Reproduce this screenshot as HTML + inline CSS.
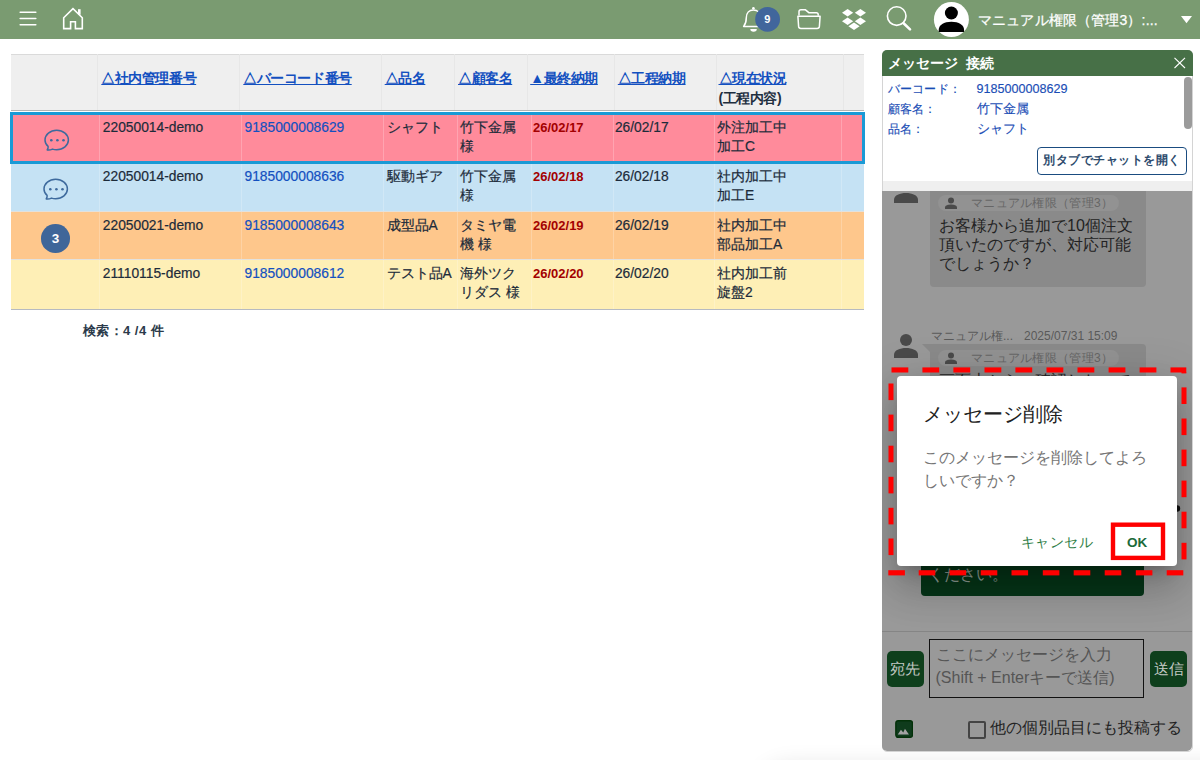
<!DOCTYPE html><html><head><meta charset="utf-8"><style>
*{box-sizing:border-box;margin:0;padding:0}
html,body{width:1200px;height:760px;overflow:hidden;background:#fff;font-family:"Liberation Sans",sans-serif;position:relative}
.a{position:absolute}
#topbar{left:0;top:0;width:1200px;height:38.5px;background:#7a9b71}
#th{left:11px;top:53.5px;width:853px;height:57.5px;background:#efefef;border-top:1px solid #dadada;border-bottom:1.5px solid #b4b4b4}
.hd{position:absolute;top:54px;width:1px;height:55.5px;background:#e7e7e7}
.ht{position:absolute;top:68.2px;font-size:14px;letter-spacing:-0.45px;font-weight:bold;line-height:20px;color:#1f2f3f;white-space:nowrap}
.ht u{color:#1350c0;text-decoration:underline;text-decoration-thickness:1px;text-underline-offset:0.5px}
.row{position:absolute;left:11px;width:853px}
.rd{position:absolute;width:1px;background:rgba(255,255,255,0.22)}
.ct{position:absolute;-webkit-text-stroke:0.2px currentColor;font-size:13.8px;line-height:18.6px;color:#1c2b3a;white-space:nowrap}
.lk{color:#1350c0}
.ht,.dt,.nb{-webkit-text-stroke:0}
.dt{color:#a30000;font-weight:bold;font-size:13px}
</style></head><body>
<div class="a" id="topbar"></div>
<svg class="a" style="left:0;top:0" width="1200" height="39" viewBox="0 0 1200 39"><g stroke="#fff" stroke-width="1.6" fill="none" stroke-linecap="round"><line x1="20.2" y1="12.2" x2="35.8" y2="12.2"/><line x1="20.2" y1="18.5" x2="35.8" y2="18.5"/><line x1="20.2" y1="24.8" x2="35.8" y2="24.8"/></g><path d="M73 8.6 L63.7 17.8 V28.6 H70.6 V21.7 H75.4 V28.6 H82.3 V17.8 Z" stroke="#fff" stroke-width="1.6" fill="none" stroke-linejoin="miter"/><rect x="78" y="9.2" width="2.6" height="5.5" fill="#fff"/><path d="M743.6 26.5 C745.6 24.2 746.3 21.5 746.3 17.8 C746.3 12.9 749.3 9.9 753.4 9.9 C757.5 9.9 760.5 12.9 760.5 17.8 C760.5 21.5 761.2 24.2 763.2 26.5 Z" stroke="#fff" stroke-width="1.5" fill="none" stroke-linejoin="round"/><circle cx="753.4" cy="8.3" r="1.3" fill="#fff"/><path d="M750.3 29 H756.8 A3.25 2.8 0 0 1 750.3 29 Z" fill="#fff"/><circle cx="767.6" cy="19.3" r="12.4" fill="#41669c"/><text x="767.4" y="23" font-family="Liberation Sans" font-weight="bold" font-size="11" fill="#fff" text-anchor="middle">9</text><g stroke="#fff" stroke-width="1.5" fill="none" stroke-linejoin="round"><path d="M799 15.5 V11.6 Q799 9.7 801 9.7 H805.2 L808.8 12.7 H816.3 Q818.2 12.7 818.2 14.6 V15.8"/><path d="M797.9 16.3 H820.1 L819.4 26.4 Q819.2 28.5 817.1 28.5 H800.9 Q798.8 28.5 798.6 26.4 Z"/></g><g fill="#fff"><polygon points="842,12.7 847.6,9 853.2,12.7 847.6,16.4"/><polygon points="854.8,12.7 860.4,9 866,12.7 860.4,16.4"/><polygon points="842,21.2 847.6,17.5 853.2,21.2 847.6,24.9"/><polygon points="854.8,21.2 860.4,17.5 866,21.2 860.4,24.9"/><polygon points="848.4,26.2 854,22.5 859.6,26.2 854,29.9"/></g><circle cx="896.7" cy="16.1" r="9.3" stroke="#fff" stroke-width="1.6" fill="none"/><line x1="903.6" y1="23.2" x2="910" y2="29.4" stroke="#fff" stroke-width="2.6" stroke-linecap="round"/><circle cx="951.4" cy="19.5" r="17.5" fill="#fff"/><circle cx="951.4" cy="13" r="6.5" fill="#000"/><path d="M938.7 32.1 V30 C938.7 25 944 21.8 951.4 21.8 C958.8 21.8 964.1 25 964.1 30 V32.1 Z" fill="#000"/><polygon points="1181,16 1192,16 1186.5,23.2" fill="#fff"/></svg>
<div class="a" style="left:978px;top:9.5px;font-size:14px;letter-spacing:0.15px;line-height:20px;color:#fff;-webkit-text-stroke:0.25px #fff;white-space:nowrap">マニュアル権限（管理3）:...</div>
<div class="a" id="th"></div>
<div class="hd" style="left:97.3px"></div>
<div class="hd" style="left:239.2px"></div>
<div class="hd" style="left:381.2px"></div>
<div class="hd" style="left:454.2px"></div>
<div class="hd" style="left:527.3px"></div>
<div class="hd" style="left:614.3px"></div>
<div class="hd" style="left:716.3px"></div>
<div class="hd" style="left:843.2px"></div>
<div class="ht" style="left:101.3px"><u>△社内管理番号</u></div>
<div class="ht" style="left:243.3px"><u>△バーコード番号</u></div>
<div class="ht" style="left:384.7px"><u>△品名</u></div>
<div class="ht" style="left:458px"><u>△顧客名</u></div>
<div class="ht" style="left:530.2px"><u>▲最終納期</u></div>
<div class="ht" style="left:617.8px"><u>△工程納期</u></div>
<div class="ht" style="left:718.5px"><u>△現在状況</u><br>(工程内容)</div>
<div class="row" style="top:111.5px;height:50.5px;background:#ff8b9b"></div>
<div class="rd" style="left:99px;top:111.5px;height:50.5px"></div>
<div class="rd" style="left:241.3px;top:111.5px;height:50.5px"></div>
<div class="rd" style="left:383.3px;top:111.5px;height:50.5px"></div>
<div class="rd" style="left:457px;top:111.5px;height:50.5px"></div>
<div class="rd" style="left:531px;top:111.5px;height:50.5px"></div>
<div class="rd" style="left:612.7px;top:111.5px;height:50.5px"></div>
<div class="rd" style="left:714.4px;top:111.5px;height:50.5px"></div>
<div class="rd" style="left:841.4px;top:111.5px;height:50.5px"></div>
<div class="ct" style="left:102.8px;top:119.3px">22050014-demo</div>
<div class="ct" style="left:244.5px;top:119.3px"><span class="lk">9185000008629</span></div>
<div class="ct" style="left:386.5px;top:119.3px">シャフト</div>
<div class="ct" style="left:460.0px;top:119.3px">竹下金属<br>様</div>
<div class="ct" style="left:533.0px;top:119.3px"><span class="dt">26/02/17</span></div>
<div class="ct" style="left:614.9px;top:119.3px">26/02/17</div>
<div class="ct" style="left:717.0px;top:119.3px">外注加工中<br>加工C</div>
<div class="row" style="top:162px;height:49.3px;background:#c5e2f4"></div>
<div class="rd" style="left:99px;top:162px;height:49.3px"></div>
<div class="rd" style="left:241.3px;top:162px;height:49.3px"></div>
<div class="rd" style="left:383.3px;top:162px;height:49.3px"></div>
<div class="rd" style="left:457px;top:162px;height:49.3px"></div>
<div class="rd" style="left:531px;top:162px;height:49.3px"></div>
<div class="rd" style="left:612.7px;top:162px;height:49.3px"></div>
<div class="rd" style="left:714.4px;top:162px;height:49.3px"></div>
<div class="rd" style="left:841.4px;top:162px;height:49.3px"></div>
<div class="ct" style="left:102.8px;top:168px">22050014-demo</div>
<div class="ct" style="left:244.5px;top:168px"><span class="lk">9185000008636</span></div>
<div class="ct" style="left:386.5px;top:168px">駆動ギア</div>
<div class="ct" style="left:460.0px;top:168px">竹下金属<br>様</div>
<div class="ct" style="left:533.0px;top:168px"><span class="dt">26/02/18</span></div>
<div class="ct" style="left:614.9px;top:168px">26/02/18</div>
<div class="ct" style="left:717.0px;top:168px">社内加工中<br>加工E</div>
<div class="row" style="top:211px;height:48.5px;background:#fec78c"></div>
<div class="rd" style="left:99px;top:211px;height:48.5px"></div>
<div class="rd" style="left:241.3px;top:211px;height:48.5px"></div>
<div class="rd" style="left:383.3px;top:211px;height:48.5px"></div>
<div class="rd" style="left:457px;top:211px;height:48.5px"></div>
<div class="rd" style="left:531px;top:211px;height:48.5px"></div>
<div class="rd" style="left:612.7px;top:211px;height:48.5px"></div>
<div class="rd" style="left:714.4px;top:211px;height:48.5px"></div>
<div class="rd" style="left:841.4px;top:211px;height:48.5px"></div>
<div class="ct" style="left:102.8px;top:217.4px">22050021-demo</div>
<div class="ct" style="left:244.5px;top:217.4px"><span class="lk">9185000008643</span></div>
<div class="ct" style="left:386.5px;top:217.4px">成型品A</div>
<div class="ct" style="left:460.0px;top:217.4px">タミヤ電<br>機 様</div>
<div class="ct" style="left:533.0px;top:217.4px"><span class="dt">26/02/19</span></div>
<div class="ct" style="left:614.9px;top:217.4px">26/02/19</div>
<div class="ct" style="left:717.0px;top:217.4px">社内加工中<br>部品加工A</div>
<div class="row" style="top:259.5px;height:49px;background:#feefb6"></div>
<div class="rd" style="left:99px;top:259.5px;height:49px"></div>
<div class="rd" style="left:241.3px;top:259.5px;height:49px"></div>
<div class="rd" style="left:383.3px;top:259.5px;height:49px"></div>
<div class="rd" style="left:457px;top:259.5px;height:49px"></div>
<div class="rd" style="left:531px;top:259.5px;height:49px"></div>
<div class="rd" style="left:612.7px;top:259.5px;height:49px"></div>
<div class="rd" style="left:714.4px;top:259.5px;height:49px"></div>
<div class="rd" style="left:841.4px;top:259.5px;height:49px"></div>
<div class="ct" style="left:102.8px;top:265.4px">21110115-demo</div>
<div class="ct" style="left:244.5px;top:265.4px"><span class="lk">9185000008612</span></div>
<div class="ct" style="left:386.5px;top:265.4px">テスト品A</div>
<div class="ct" style="left:460.0px;top:265.4px">海外ツク<br>リダス 様</div>
<div class="ct" style="left:533.0px;top:265.4px"><span class="dt">26/02/20</span></div>
<div class="ct" style="left:614.9px;top:265.4px">26/02/20</div>
<div class="ct" style="left:717.0px;top:265.4px">社内加工前<br>旋盤2</div>
<div class="a" style="left:11px;top:211px;width:853px;height:1px;background:#e3e1dc"></div>
<div class="a" style="left:11px;top:259px;width:853px;height:1px;background:#e3e1dc"></div>
<svg class="a" style="left:42.6px;top:127.5px" width="28" height="26" viewBox="0 0 28 26"><path d="M4.2 21.9 C4.9 20.8 5.4 19.5 5.1 18.4 C3.2 16.7 2 14.5 2 12 C2 6.6 7.2 2.3 13.7 2.3 C20.2 2.3 25.4 6.6 25.4 12 C25.4 17.4 20.2 21.7 13.7 21.7 C12.2 21.7 10.8 21.5 9.5 21.1 C8 21.8 6 22.2 4.2 21.9 Z" fill="none" stroke="#3e6a9d" stroke-width="1.5" stroke-linejoin="round"/><circle cx="8.3" cy="12.2" r="1.3" fill="#3e6a9d"/><circle cx="14.4" cy="12.2" r="1.3" fill="#3e6a9d"/><circle cx="20.5" cy="12.2" r="1.3" fill="#3e6a9d"/></svg>
<svg class="a" style="left:42.2px;top:176.7px" width="28" height="26" viewBox="0 0 28 26"><path d="M4.2 21.9 C4.9 20.8 5.4 19.5 5.1 18.4 C3.2 16.7 2 14.5 2 12 C2 6.6 7.2 2.3 13.7 2.3 C20.2 2.3 25.4 6.6 25.4 12 C25.4 17.4 20.2 21.7 13.7 21.7 C12.2 21.7 10.8 21.5 9.5 21.1 C8 21.8 6 22.2 4.2 21.9 Z" fill="none" stroke="#3e6a9d" stroke-width="1.5" stroke-linejoin="round"/><circle cx="8.3" cy="12.2" r="1.3" fill="#3e6a9d"/><circle cx="14.4" cy="12.2" r="1.3" fill="#3e6a9d"/><circle cx="20.5" cy="12.2" r="1.3" fill="#3e6a9d"/></svg>
<div class="a" style="left:41.2px;top:224px;width:28.6px;height:28.6px;border-radius:50%;background:#3f6699;color:#fff;font-size:13.5px;font-weight:bold;line-height:29.5px;-webkit-text-stroke:0;text-align:center">3</div>
<div class="a" style="left:11px;top:308.5px;width:853px;height:1.5px;background:#b6bac1"></div>
<div class="a" style="left:10px;top:112px;width:855px;height:52px;border:3px solid #1a9ad6"></div>
<div class="a" style="left:82.5px;top:322px;font-size:13px;letter-spacing:0.5px;font-weight:bold;color:#2b3a4a;white-space:nowrap;-webkit-text-stroke:0">検索：4 /4 件</div>
<div class="a" style="left:760px;top:768px;width:700px;height:60px;border-radius:30px;box-shadow:0 0 22px 4px rgba(0,0,0,0.10)"></div>
<div class="a" style="left:881.5px;top:49.5px;width:311px;height:702px;border-radius:5px;background:#fff;border:1px solid #d4d4d4"></div>
<div class="a" style="left:881.5px;top:49.5px;width:311px;height:26.3px;border-radius:5px 5px 0 0;background:#477047"></div>
<div class="a" style="left:887.5px;top:52.5px;font-size:14px;font-weight:bold;line-height:20px;color:#fff;white-space:nowrap;-webkit-text-stroke:0">メッセージ<span style="margin-left:8px">接続</span></div>
<svg class="a" style="left:1170px;top:53px" width="20" height="20"><path d="M4.5 4.8 L15 15 M15 4.8 L4.5 15" stroke="#fff" stroke-width="1.1"/></svg>
<div class="a" style="left:882.5px;top:180.6px;width:309.5px;height:10.5px;background:#efefef"></div>
<div class="a" style="left:882.5px;top:76px;width:309.5px;height:104.8px;background:#fff;border-radius:0 0 5px 5px"></div>
<div class="a" style="left:1184.2px;top:76.8px;width:7.6px;height:52px;background:#9b9b9b;border-radius:4px"></div>
<div class="a" style="left:887.5px;top:80.5px;-webkit-text-stroke:0.15px currentColor;font-size:12px;letter-spacing:0.25px;line-height:16px;color:#1a4db5;white-space:nowrap">バーコード：</div>
<div class="a" style="left:976.5px;top:80.5px;-webkit-text-stroke:0.15px currentColor;font-size:12.6px;line-height:16px;color:#1a4db5;white-space:nowrap">9185000008629</div>
<div class="a" style="left:887.5px;top:100.5px;-webkit-text-stroke:0.15px currentColor;font-size:12px;letter-spacing:0.25px;line-height:16px;color:#1a4db5;white-space:nowrap">顧客名：</div>
<div class="a" style="left:976.5px;top:100.5px;-webkit-text-stroke:0.15px currentColor;font-size:12.6px;line-height:16px;color:#1a4db5;white-space:nowrap">竹下金属</div>
<div class="a" style="left:887.5px;top:120.5px;-webkit-text-stroke:0.15px currentColor;font-size:12px;letter-spacing:0.25px;line-height:16px;color:#1a4db5;white-space:nowrap">品名：</div>
<div class="a" style="left:976.5px;top:120.5px;-webkit-text-stroke:0.15px currentColor;font-size:12.6px;line-height:16px;color:#1a4db5;white-space:nowrap">シャフト</div>
<div class="a" style="left:1037px;top:147px;width:150px;height:27.7px;border:1.4px solid #1a4c80;border-radius:4px;font-size:12px;letter-spacing:0.5px;font-weight:bold;color:#2c4a6c;-webkit-text-stroke:0;line-height:25px;text-align:center;white-space:nowrap">別タブでチャットを開く</div>
<div class="a" style="left:882px;top:191px;width:310px;height:560px;background:#999999;border-radius:0 0 5px 5px;overflow:hidden">
<svg class="a" style="left:12px;top:-12px" width="24" height="25" viewBox="0 0 24 25"><circle cx="12" cy="6" r="6" fill="#4a4a4a"/><path d="M0 24 V21 C0 16 6 14 12 14 C18 14 24 16 24 21 V24 Z" fill="#4a4a4a"/></svg>
<div class="a" style="left:48px;top:-40px;width:216px;height:136px;background:#8a8a8a;border-radius:4px"></div>
<div class="a" style="left:56px;top:4px;width:181px;height:16px;background:#929292;border-radius:8px"></div>
<svg class="a" style="left:62px;top:5px" width="14" height="14" viewBox="0 0 14 14"><circle cx="7" cy="4.4" r="3" fill="#4a4a4a"/><path d="M1 13 V11.6 C1 9.4 4.5 8.6 7 8.6 C9.5 8.6 13 9.4 13 11.6 V13 Z" fill="#4a4a4a"/></svg>
<div class="a" style="left:89px;top:4px;font-size:12px;letter-spacing:0.3px;line-height:16px;color:#666;white-space:nowrap">マニュアル権限（管理3）</div>
<div class="a" style="left:57px;top:25px;width:200px;font-size:16px;line-height:19px;color:#222">お客様から追加で10個注文頂いたのですが、対応可能でしょうか？</div>
<div class="a" style="left:49px;top:137px;font-size:12px;line-height:16px;color:#5a5a5a;white-space:nowrap">マニュアル権...<span style="margin-left:11px">2025/07/31 15:09</span></div>
<svg class="a" style="left:12px;top:143px" width="24" height="25" viewBox="0 0 24 25"><circle cx="12" cy="6" r="6" fill="#4a4a4a"/><path d="M0 24 V21 C0 16 6 14 12 14 C18 14 24 16 24 21 V24 Z" fill="#4a4a4a"/></svg>
<div class="a" style="left:48px;top:153px;width:216px;height:100px;background:#8a8a8a;border-radius:0 4px 4px 4px"></div>
<svg class="a" style="left:40px;top:153px" width="9" height="10"><polygon points="0,0 9,0 9,9" fill="#8a8a8a"/></svg>
<div class="a" style="left:56px;top:159px;width:181px;height:16px;background:#929292;border-radius:8px"></div>
<svg class="a" style="left:62px;top:160px" width="14" height="14" viewBox="0 0 14 14"><circle cx="7" cy="4.4" r="3" fill="#4a4a4a"/><path d="M1 13 V11.6 C1 9.4 4.5 8.6 7 8.6 C9.5 8.6 13 9.4 13 11.6 V13 Z" fill="#4a4a4a"/></svg>
<div class="a" style="left:89px;top:159px;font-size:12px;letter-spacing:0.3px;line-height:16px;color:#666;white-space:nowrap">マニュアル権限（管理3）</div>
<div class="a" style="left:57px;top:180px;width:200px;font-size:16px;line-height:19px;color:#222">画面上から、確認したいです。</div>
<div class="a" style="left:39px;top:300px;width:223px;height:104.5px;background:#063518;border-radius:4px"></div>
<div class="a" style="left:46px;top:373.5px;font-size:16px;line-height:19px;color:#8c9a90;white-space:nowrap">ください。</div>
<div class="a" style="left:0;top:439.5px;width:310px;height:1px;background:#858585"></div>
<div class="a" style="left:4.8px;top:460px;width:37px;height:35.5px;background:#0e3f1c;border-radius:5px;color:#c4c9c5;font-size:15px;line-height:35px;text-align:center">宛先</div>
<div class="a" style="left:47.2px;top:448.2px;width:215.3px;height:59.2px;border:1px solid #111"></div>
<div class="a" style="left:53.5px;top:452px;font-size:16px;line-height:23px;color:#555;white-space:nowrap">ここにメッセージを入力<br>(Shift + Enterキーで送信)</div>
<div class="a" style="left:268px;top:460px;width:37px;height:35.5px;background:#0e3f1c;border-radius:5px;color:#c4c9c5;font-size:15px;line-height:35px;text-align:center">送信</div>
<svg class="a" style="left:12.7px;top:528.9px" width="18.3" height="18" viewBox="0 0 18 18"><rect x="0.7" y="0.7" width="16.6" height="16.6" rx="2.2" fill="#0f3b1c" stroke="#033008" stroke-width="1.4"/><path d="M2.6 14.5 L5.8 9.7 L8.1 12.5 L9.8 8.8 L13.8 14.5 Z" fill="#a3a3a3"/></svg>
<div class="a" style="left:86px;top:529.8px;width:17.5px;height:17.8px;border:2px solid #444;border-radius:2px"></div>
<div class="a" style="left:108px;top:527px;font-size:16px;line-height:20px;color:#222;white-space:nowrap">他の個別品目にも投稿する</div>
<svg class="a" style="left:288px;top:310px" width="14" height="14"><circle cx="7" cy="7.5" r="3.2" fill="#111"/></svg>
<div class="a" style="left:15px;top:185px;width:280px;height:189.8px;background:#fff;border-radius:4px;box-shadow:0 11px 15px -7px rgba(0,0,0,.2),0 24px 38px 3px rgba(0,0,0,.14),0 9px 46px 8px rgba(0,0,0,.12)"></div>
<div class="a" style="left:41px;top:209px;font-size:20px;line-height:28px;color:#212121;white-space:nowrap">メッセージ削除</div>
<div class="a" style="left:41px;top:254.5px;width:232px;font-size:16px;line-height:23.8px;color:#757575">このメッセージを削除してよろしいですか？</div>
<div class="a" style="left:138.5px;top:341px;font-size:14px;line-height:20px;color:#2e7d45;letter-spacing:0.5px;white-space:nowrap">キャンセル</div>
<div class="a" style="left:245px;top:341.5px;font-size:13.5px;font-weight:bold;line-height:20px;color:#1b6b3a;-webkit-text-stroke:0;white-space:nowrap">OK</div>
</div>
<svg class="a" style="left:0;top:0" width="1200" height="760"><rect x="1113" y="524.7" width="50" height="33.2" fill="none" stroke="#ff0000" stroke-width="4.4"/><rect x="891.5" y="367.4" width="16.8" height="5.1" fill="#f00"/><rect x="922.4" y="367.4" width="16.8" height="5.1" fill="#f00"/><rect x="953.4" y="367.4" width="16.8" height="5.1" fill="#f00"/><rect x="984.5" y="367.4" width="16.8" height="5.1" fill="#f00"/><rect x="1015.4" y="367.4" width="16.8" height="5.1" fill="#f00"/><rect x="1046.5" y="367.4" width="16.8" height="5.1" fill="#f00"/><rect x="1077.5" y="367.4" width="16.8" height="5.1" fill="#f00"/><rect x="1108.6" y="367.4" width="16.8" height="5.1" fill="#f00"/><rect x="1139.6" y="367.4" width="16.8" height="5.1" fill="#f00"/><rect x="1170.5" y="367.4" width="15.8" height="5.1" fill="#f00"/><rect x="1181.5" y="372" width="4.8" height="1.4" fill="#f00"/><rect x="1181.5" y="387.4" width="5" height="16.6" fill="#f00"/><rect x="1181.5" y="418.5" width="5" height="16.6" fill="#f00"/><rect x="1181.5" y="449.6" width="5" height="16.6" fill="#f00"/><rect x="1181.5" y="480.6" width="5" height="16.6" fill="#f00"/><rect x="1181.5" y="511.7" width="5" height="16.6" fill="#f00"/><rect x="1181.5" y="542.8" width="5" height="16.6" fill="#f00"/><rect x="888.5" y="383.5" width="5" height="16.6" fill="#f00"/><rect x="888.5" y="414.6" width="5" height="16.6" fill="#f00"/><rect x="888.5" y="445.7" width="5" height="16.6" fill="#f00"/><rect x="888.5" y="476.8" width="5" height="16.6" fill="#f00"/><rect x="888.5" y="507.8" width="5" height="16.6" fill="#f00"/><rect x="888.5" y="538.5" width="5" height="16.6" fill="#f00"/><rect x="888.3" y="570.2" width="16.6" height="5.2" fill="#f00"/><rect x="918.7" y="570.2" width="16.6" height="5.2" fill="#f00"/><rect x="949.6" y="570.2" width="16.6" height="5.2" fill="#f00"/><rect x="980.7" y="570.2" width="16.6" height="5.2" fill="#f00"/><rect x="1011.5" y="570.2" width="16.6" height="5.2" fill="#f00"/><rect x="1042.8" y="570.2" width="16.6" height="5.2" fill="#f00"/><rect x="1073.7" y="570.2" width="16.6" height="5.2" fill="#f00"/><rect x="1104.7" y="570.2" width="16.6" height="5.2" fill="#f00"/><rect x="1135.8" y="570.2" width="16.6" height="5.2" fill="#f00"/><rect x="1166.7" y="570.2" width="16.6" height="5.2" fill="#f00"/></svg>
</body></html>
